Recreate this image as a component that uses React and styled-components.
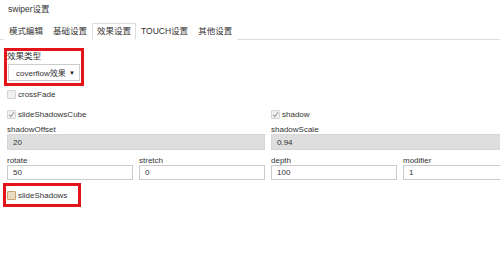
import React from 'react';
import styled, { createGlobalStyle } from 'styled-components';

const GlobalStyle = createGlobalStyle`
  html, body {
    margin: 0;
    padding: 0;
    background: #ffffff;
  }
  body {
    font-family: "Liberation Sans", Arial, "Noto Sans CJK SC", sans-serif;
    font-size: 8px;
    color: #333333;
  }
`;

const Page = styled.div`
  overflow: hidden;
  padding-bottom: 10px;
`;

const Title = styled.div`
  padding: 4px 0 0 8px;
  font-size: 8.5px;
  line-height: 10px;
`;

const TabBar = styled.div`
  display: flex;
  margin-top: 9px;
  padding-left: 4px;
  border-bottom: 1px solid #dddddd;
`;

const Tab = styled.div`
  padding: 0 4px;
  line-height: 15px;
  font-size: 8.5px;
  border: 1px solid ${(p) => (p.$active ? '#dddddd' : 'transparent')};
  border-bottom-color: ${(p) => (p.$active ? '#ffffff' : 'transparent')};
  background: #ffffff;
  margin-bottom: -1px;
  color: #333333;
  white-space: nowrap;
`;

const Content = styled.div`
  width: 530px;
  padding-left: 7px;
`;

const Highlight = styled.div`
  outline: 3px solid #e3151b;
`;

const SelectGroup = styled(Highlight)`
  width: 74px;
  margin-top: 11px;
  padding-bottom: 2px;
`;

const GroupLabel = styled.div`
  line-height: 11px;
  font-size: 8.5px;
`;

const SelectBox = styled.div`
  display: flex;
  align-items: center;
  justify-content: space-between;
  box-sizing: border-box;
  width: 72px;
  height: 17px;
  margin: 2px 0 0 1px;
  padding: 0 4px 0 7px;
  border: 1px solid #cccccc;
  background: #ffffff;
  font-size: 8px;
`;

const Arrow = styled.span`
  font-size: 6px;
  color: #222222;
`;

const Grid = styled.div`
  display: grid;
  grid-template-columns: repeat(4, 126px);
  column-gap: 6px;
`;

const Cell = styled.div`
  grid-column: span ${(p) => p.$span || 1};
`;

const CheckRow = styled.label`
  display: flex;
  align-items: center;
  height: 20px;
  gap: 2px;
  margin-top: ${(p) => p.$top || 0}px;
`;

const Box = styled.span`
  display: inline-flex;
  align-items: center;
  justify-content: center;
  box-sizing: border-box;
  width: 9px;
  height: 9px;
  border: 1px solid ${(p) => (p.$hover ? '#c9a46e' : '#d4d4d4')};
  background: ${(p) => (p.$hover ? '#eadbc3' : '#f0f0f0')};
  border-radius: 1px;
`;

const FieldLabel = styled.div`
  line-height: 9px;
  margin-top: ${(p) => p.$top || 0}px;
`;

const Input = styled.input`
  display: block;
  box-sizing: border-box;
  width: 100%;
  height: ${(p) => (p.disabled ? 16 : 15)}px;
  margin: 0;
  padding: 0 5px;
  border: 1px solid ${(p) => (p.disabled ? '#d6d6d6' : '#cccccc')};
  background: ${(p) => (p.disabled ? '#dedede' : '#ffffff')};
  font-family: inherit;
  font-size: 8px;
  color: #333333;
  outline: none;
`;

const ShadowGroup = styled(Highlight)`
  display: flex;
  align-items: center;
  gap: 2px;
  width: 71px;
  height: 18px;
  margin: 6px 0 0 -1px;
  padding-left: 1px;
`;

const Check = ({ checked, hover }) => (
  <Box $hover={hover}>
    {checked && (
      <svg width="7" height="7" viewBox="0 0 7 7">
        <polyline points="1,3.8 2.8,5.6 6,1.4" fill="none" stroke="#a0a0a0" strokeWidth="1.1" />
      </svg>
    )}
  </Box>
);

const tabs = ['模式编辑', '基础设置', '效果设置', 'TOUCH设置', '其他设置'];

const App = () => (
  <Page>
    <GlobalStyle />
    <Title>swiper设置</Title>
    <TabBar>
      {tabs.map((t, i) => (
        <Tab key={t} $active={i === 2}>
          {t}
        </Tab>
      ))}
    </TabBar>
    <Content>
      <SelectGroup>
        <GroupLabel>效果类型</GroupLabel>
        <SelectBox>
          <span>coverflow效果</span>
          <Arrow>▼</Arrow>
        </SelectBox>
      </SelectGroup>

      <CheckRow $top={1}>
        <Check />
        crossFade
      </CheckRow>

      <Grid>
        <Cell $span={2}>
          <CheckRow>
            <Check checked />
            slideShadowsCube
          </CheckRow>
        </Cell>
        <Cell $span={2}>
          <CheckRow>
            <Check checked />
            shadow
          </CheckRow>
        </Cell>

        <Cell $span={2}>
          <FieldLabel $top={1}>shadowOffset</FieldLabel>
          <Input disabled defaultValue="20" />
        </Cell>
        <Cell $span={2}>
          <FieldLabel $top={1}>shadowScale</FieldLabel>
          <Input disabled defaultValue="0.94" />
        </Cell>

        {[
          ['rotate', '50'],
          ['stretch', '0'],
          ['depth', '100'],
          ['modifier', '1'],
        ].map(([label, value]) => (
          <Cell key={label}>
            <FieldLabel $top={6}>{label}</FieldLabel>
            <Input defaultValue={value} />
          </Cell>
        ))}
      </Grid>

      <ShadowGroup>
        <Check hover />
        slideShadows
      </ShadowGroup>
    </Content>
  </Page>
);

export default App;
